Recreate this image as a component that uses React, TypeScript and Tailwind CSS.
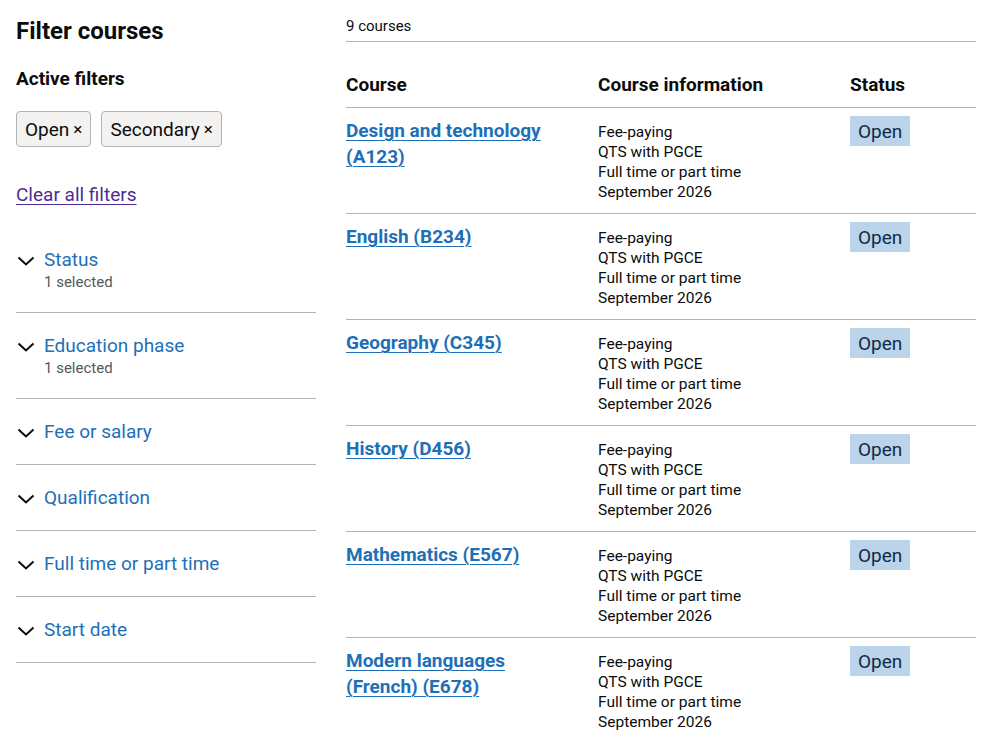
import React from "react";

const filters = [
  { title: "Status", sub: "1 selected" },
  { title: "Education phase", sub: "1 selected" },
  { title: "Fee or salary" },
  { title: "Qualification" },
  { title: "Full time or part time" },
  { title: "Start date" },
];

const courses = [
  "Design and technology (A123)",
  "English (B234)",
  "Geography (C345)",
  "History (D456)",
  "Mathematics (E567)",
  "Modern languages (French) (E678)",
];

function Chevron() {
  return (
    <svg width="18" height="12" viewBox="0 0 18 12" className="shrink-0 mt-[8px]" aria-hidden>
      <path d="M1.5 2.5 L9 9.5 L16.5 2.5" fill="none" stroke="#0b0c0c" strokeWidth="2" />
    </svg>
  );
}

export default function App() {
  return (
    <div
      className="flex gap-[30px] px-4 text-[#0b0c0c] bg-white min-h-[742px]"
      style={{ fontFamily: "Roboto, 'Liberation Sans', sans-serif" }}
    >
      <div className="w-[300px] shrink-0">
        <h2 className="mt-[16px] text-[24px] leading-[30px] font-bold">Filter courses</h2>
        <h3 className="mt-[20px] text-[19px] leading-[25px] font-bold">Active filters</h3>
        <div className="mt-[20px] flex gap-[10px]">
          {["Open", "Secondary"].map((t) => (
            <span
              key={t}
              className="h-[36px] px-[8px] flex items-center border border-[#b1b4b6] rounded-[4px] bg-[#f3f2f1] text-[19px] leading-[25px]"
            >
              {t}
              <span className="ml-[4px] text-[17px]">×</span>
            </span>
          ))}
        </div>
        <a
          href="#"
          className="block mt-[35px] text-[19px] leading-[25px] text-[#4c2c92] underline underline-offset-[3px] decoration-1 w-fit"
        >
          Clear all filters
        </a>
        <div className="mt-[20px]">
          {filters.map((f) => (
            <div key={f.title} className="py-[20px] border-b border-[#b1b4b6] flex gap-[9px] pl-[1px]">
              <Chevron />
              <div>
                <div className="text-[19px] leading-[25px] text-[#1d70b8]">{f.title}</div>
                {f.sub && <div className="text-[15px] leading-[20px] text-[#505a5f]">{f.sub}</div>}
              </div>
            </div>
          ))}
        </div>
      </div>

      <div className="w-[630px]">
        <div className="pt-[16px] pb-[5px] border-b border-[#b1b4b6] text-[15px] leading-[20px]">9 courses</div>
        <table className="mt-[20px] w-[630px] table-fixed border-collapse">
          <thead>
            <tr className="border-b border-[#b1b4b6]">
              <th className="w-[252px] text-left py-[10px] text-[19px] leading-[25px] font-bold">Course</th>
              <th className="w-[252px] text-left py-[10px] text-[19px] leading-[25px] font-bold">Course information</th>
              <th className="w-[126px] text-left py-[10px] text-[19px] leading-[25px] font-bold">Status</th>
            </tr>
          </thead>
          <tbody>
            {courses.map((c) => (
              <tr key={c} className="border-b border-[#b1b4b6] align-top">
                <td className="pt-[10px] pr-[20px]">
                  <a
                    href="#"
                    className="text-[19px] leading-[25px] font-bold text-[#1d70b8] underline underline-offset-[3px] decoration-1"
                  >
                    {c}
                  </a>
                </td>
                <td className="pt-[14px] pb-[11px] text-[15.5px] leading-[20px]">
                  <div>Fee-paying</div>
                  <div>QTS with PGCE</div>
                  <div>Full time or part time</div>
                  <div>September 2026</div>
                </td>
                <td className="pt-[8px]">
                  <span className="inline-block px-[8px] pt-[3px] pb-[2px] bg-[#bbd4ea] text-[#0c2d4a] text-[19px] leading-[25px]">
                    Open
                  </span>
                </td>
              </tr>
            ))}
          </tbody>
        </table>
      </div>
    </div>
  );
}
